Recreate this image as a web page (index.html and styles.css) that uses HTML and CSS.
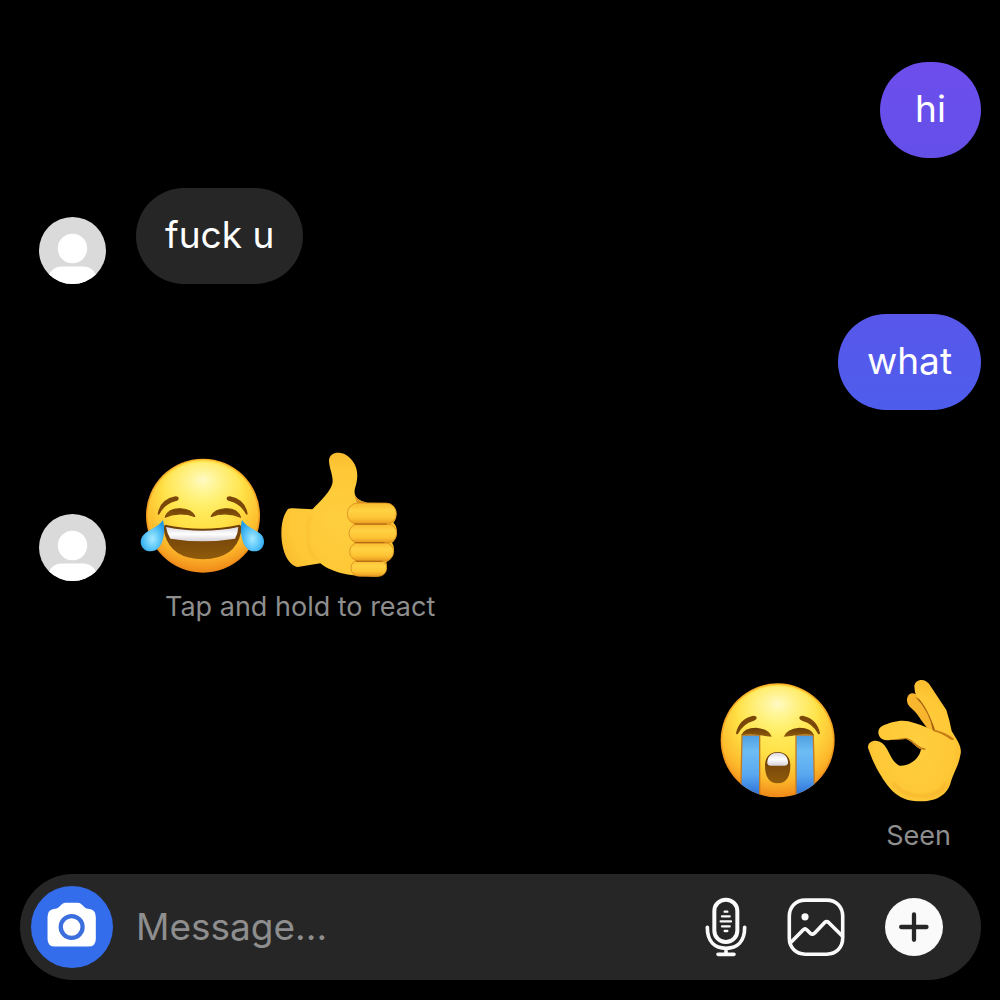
FILE: index.html
```
<!DOCTYPE html>
<html lang="en">
<head>
    <meta charset="UTF-8">
    <meta name="viewport" content="width=device-width, initial-scale=1.0">
    <title>Chat</title>
    <link rel="stylesheet" href="styles.css">
</head>
<body>
    <!-- shared gradients and the avatar -->
    <svg class="defs" width="0" height="0" aria-hidden="true">
        <defs>
            <radialGradient id="face" cx="50%" cy="28%" r="72%">
                <stop offset="0" stop-color="#fff36e"/>
                <stop offset="0.5" stop-color="#ffe045"/>
                <stop offset="0.8" stop-color="#fdb92b"/>
                <stop offset="1" stop-color="#f18d1b"/>
            </radialGradient>
            <radialGradient id="shine" cx="50%" cy="30%" r="60%">
                <stop offset="0" stop-color="#fffbd0" stop-opacity="0.9"/>
                <stop offset="1" stop-color="#fff36e" stop-opacity="0"/>
            </radialGradient>
            <linearGradient id="edge" x1="0" y1="0" x2="0" y2="1">
                <stop offset="0" stop-color="#fbb52c"/>
                <stop offset="1" stop-color="#ee8a19"/>
            </linearGradient>
            <linearGradient id="brown" x1="0" y1="0" x2="0" y2="1">
                <stop offset="0" stop-color="#6b3c07"/>
                <stop offset="1" stop-color="#8f5b0c"/>
            </linearGradient>
            <linearGradient id="teeth" x1="0" y1="0" x2="0" y2="1">
                <stop offset="0" stop-color="#d9d6dc"/>
                <stop offset="0.5" stop-color="#ffffff"/>
                <stop offset="1" stop-color="#d5d0d6"/>
            </linearGradient>
            <radialGradient id="drop" cx="50%" cy="60%" r="60%">
                <stop offset="0" stop-color="#a5e9ff"/>
                <stop offset="0.5" stop-color="#5fc8fa"/>
                <stop offset="1" stop-color="#209ce8"/>
            </radialGradient>
            <linearGradient id="stream" x1="0" y1="0" x2="0" y2="1">
                <stop offset="0" stop-color="#4d9fe0"/>
                <stop offset="0.25" stop-color="#6dbcf4"/>
                <stop offset="0.6" stop-color="#5aa9f0"/>
                <stop offset="1" stop-color="#2465d4"/>
            </linearGradient>
            <radialGradient id="hand" cx="50%" cy="55%" r="60%">
                <stop offset="0" stop-color="#ffcf3f"/>
                <stop offset="0.7" stop-color="#fec836"/>
                <stop offset="1" stop-color="#f8b82c"/>
            </radialGradient>
            <linearGradient id="finger" x1="0" y1="0" x2="0" y2="1">
                <stop offset="0" stop-color="#f9ba2e"/>
                <stop offset="0.35" stop-color="#ffd244"/>
                <stop offset="0.7" stop-color="#fec535"/>
                <stop offset="1" stop-color="#e89a20"/>
            </linearGradient>
            <clipPath id="cry-clip"><circle cx="218" cy="211" r="171"/></clipPath>
            <clipPath id="avatar-clip"><circle cx="100" cy="100" r="100"/></clipPath>
            <filter id="soft"><feGaussianBlur stdDeviation="4"/></filter>
            <symbol id="avatar" viewBox="0 0 200 200">
                <g clip-path="url(#avatar-clip)">
                    <rect width="200" height="200" fill="#dadada"/>
                    <circle cx="100" cy="94" r="44" fill="#fff"/>
                    <path d="M24 200 Q28 148 70 148 H130 Q172 148 176 200Z" fill="#fff"/>
                </g>
            </symbol>
        </defs>
    </svg>

    <main class="chat">
        <div class="message sent">
            <p class="bubble purple">hi</p>
        </div>

        <div class="message">
            <svg class="avatar" role="img" aria-label="Profile"><use href="#avatar"/></svg>
            <p class="bubble">fuck u</p>
        </div>

        <div class="message sent">
            <p class="bubble blue">what</p>
        </div>

        <div class="message">
            <svg class="avatar" role="img" aria-label="Profile"><use href="#avatar"/></svg>
            <div class="emojis">
                <svg class="emoji" viewBox="18 0 396 423" role="img" aria-label="Face with tears of joy">
                    <circle cx="219" cy="227" r="171" fill="url(#edge)"/>
                    <circle cx="219" cy="227" r="166" fill="url(#face)"/>
                    <ellipse cx="219" cy="155" rx="122" ry="88" fill="url(#shine)"/>
                    <g fill="#7b4708">
                        <path d="M83 222 Q90 178 136 169 Q147 169 146 177 Q145 182 136 184 Q104 192 88 223 Q84 226 83 222Z"/>
                        <path d="M353 222 Q346 178 300 169 Q289 169 290 177 Q291 182 300 184 Q332 192 348 223 Q352 226 353 222Z"/>
                    </g>
                    <path d="M105 232 Q112 206 150 206 Q188 208 195 230 Q171 220 149 222 Q124 223 105 232Z" fill="url(#brown)" stroke="#7b4708" stroke-width="3" stroke-linejoin="round"/>
                    <path d="M243 230 Q250 208 288 206 Q325 206 332 232 Q312 223 288 222 Q266 220 243 230Z" fill="url(#brown)" stroke="#7b4708" stroke-width="3" stroke-linejoin="round"/>
                    <path d="M104 254 Q218 278 329 254 Q337 258 333 277 Q316 357 219 358 Q124 357 104 283 Q100 263 104 254Z" fill="url(#brown)"/>
                    <path d="M108 261 Q218 284 325 261 Q324 281 315 296 Q218 312 121 296 Q111 280 108 261Z" fill="url(#teeth)"/>
                    <path d="M99 240 C108 273 101 334 62 334 C34 334 23 303 41 284 C55 269 84 262 99 240Z" fill="url(#drop)"/>
                    <path d="M336 240 C327 273 336 334 373 334 C400 334 411 303 394 284 C379 269 350 262 336 240Z" fill="url(#drop)"/>
                </svg>
                <svg class="emoji" viewBox="-6 0 396 423" role="img" aria-label="Thumbs up">
                    <path d="M188 122 C188 104 177 80 177 62 C178 31 222 31 242 56 C268 83 264 118 255 145 C249 169 263 181 291 188 L350 189 C378 189 388 230 370 248 C385 259 385 297 366 308 C378 326 372 356 349 366 C355 391 342 410 318 410 C262 411 187 402 151 370 L83 381 C31 371 19 249 54 207 Q60 204 68 205 L127 208 C149 184 188 151 188 122Z" fill="url(#hand)"/>
                    <path d="M122 225 Q109 250 114 310 Q122 348 145 360" fill="none" stroke="#f2a826" stroke-width="7" opacity="0.3" filter="url(#soft)"/>
                    <path d="M252 162 Q258 182 292 189 L262 192Z" fill="#dd9224"/>
                    <g fill="url(#finger)" stroke="#ce8119" stroke-width="2">
                        <rect x="243" y="360" width="107" height="49" rx="24"/>
                        <rect x="239" y="307" width="132" height="56" rx="28"/>
                        <rect x="237" y="251" width="143" height="58" rx="29"/>
                        <rect x="232" y="189" width="147" height="64" rx="31"/>
                    </g>
                    <path d="M254 252 H350 M254 308 H344 M258 364 H336" stroke="#aa6414" stroke-width="3" fill="none"/>
                </svg>
            </div>
        </div>
        <p class="caption">Tap and hold to react</p>

        <div class="message sent">
            <div class="emojis">
                <svg class="emoji" viewBox="36 -3 396 423" role="img" aria-label="Loudly crying face">
                    <circle cx="218" cy="211" r="171" fill="url(#edge)"/>
                    <circle cx="218" cy="211" r="166" fill="url(#face)"/>
                    <ellipse cx="218" cy="137" rx="122" ry="88" fill="url(#shine)"/>
                    <g fill="#7b4708">
                        <path d="M93 190 Q101 147 145 137 Q156 137 155 145 Q154 150 145 153 Q115 161 99 191 Q94 195 93 190Z"/>
                        <path d="M345 190 Q337 147 293 137 Q282 137 283 145 Q284 150 293 153 Q323 161 339 191 Q344 195 345 190Z"/>
                    </g>
                    <g clip-path="url(#cry-clip)">
                        <path d="M111 195 H164 V390 H107Z" fill="url(#stream)" stroke="#c17a22" stroke-width="4"/>
                        <path d="M273 195 H325 L329 390 H273Z" fill="url(#stream)" stroke="#c17a22" stroke-width="4"/>
                    </g>
                    <path d="M109 196 Q116 173 153 173 Q192 177 200 200 Q177 198 157 194 Q130 190 109 196Z" fill="url(#brown)"/>
                    <path d="M236 200 Q244 177 283 173 Q320 173 327 196 Q306 190 280 194 Q259 198 236 200Z" fill="url(#brown)"/>
                    <path d="M218 246 C244 246 256 264 256 287 C256 320 243 340 218 340 C193 340 180 320 180 287 C180 264 192 246 218 246Z" fill="url(#brown)"/>
                    <path d="M218 248 C240 248 250 264 249 280 Q247 287 240 287 H196 Q188 287 187 280 C186 264 196 248 218 248Z" fill="url(#teeth)"/>
                </svg>
                <svg class="emoji" viewBox="-3 -3 396 423" role="img" aria-label="OK hand">
                    <path d="M171 92 C170 68 194 63 204 80 L238 132 L251 185 L231 173 C211 150 204 130 180 111 Q171 103 171 92Z" fill="#f8b62e"/>
                    <path d="M196 81 Q238 122 250 186 L264 188 Q253 135 218 93Z" fill="#a8620f"/>
                    <path d="M193 49 C194 26 228 22 241 47 L289 120 Q299 150 305 183 C321 210 338 231 331 256 C326 287 311 306 301 341 C285 389 235 397 192 393 C133 387 105 339 79 293 C68 272 60 251 54 233 C53 210 82 206 97 220 C120 239 119 273 149 287 C179 288 207 269 213 238 C194 230 186 212 168 207 L110 211 C83 210 76 177 98 167 C119 158 150 148 175 154 Q217 164 257 185 C242 139 223 102 200 79 Q193 66 193 49Z" fill="url(#hand)"/>
                    <path d="M110 211 L168 207 C187 212 195 231 213 238 C231 243 233 235 217 233 C199 226 190 209 169 203Z" fill="#c57a15"/>
                    <path d="M249 182 Q280 191 300 208 Q311 213 312 206 Q285 187 258 180Z" fill="#c77c16"/>
                    <path d="M288 338 Q276 366 238 376 Q168 388 128 338" fill="none" stroke="#ed9a22" stroke-width="8" opacity="0.4" filter="url(#soft)"/>
                </svg>
            </div>
        </div>
        <p class="caption caption-sent">Seen</p>
    </main>

    <form class="composer">
        <button class="icon-btn" type="button" aria-label="Camera">
            <svg width="82" height="82" viewBox="65 63 248 248">
                <circle cx="189" cy="187" r="124" fill="#346dec"/>
                <path d="M138 132 C153 132 154 114 170 114 H206 C222 114 223 132 238 132 Q261 134 261 156 V223 Q261 246 238 246 H138 Q115 246 115 223 V156 Q115 134 138 132Z" fill="#fff"/>
                <circle cx="188" cy="187" r="33" fill="none" stroke="#3b6fdd" stroke-width="13"/>
            </svg>
        </button>
        <input class="message-input" type="text" placeholder="Message..." aria-label="Message">
        <div class="actions">
            <button class="icon-btn" type="button" aria-label="Voice message">
                <svg width="42" height="60" viewBox="43 96 126 180" fill="none" stroke="#fafafa" stroke-linecap="round">
                    <rect x="71" y="104" width="69" height="127" rx="34" stroke-width="12"/>
                    <path d="M50 187 C50 231 73 250 106 250 C139 250 162 231 162 187 M106 250 V268 M82 268 H130" stroke-width="11"/>
                    <path d="M102 140 H110 M94 154 H117 M90 169 H121 M94 184 H117 M102 198 H110" stroke-width="7"/>
                </svg>
            </button>
            <button class="icon-btn" type="button" aria-label="Photo gallery">
                <svg width="58" height="60" viewBox="293 96 177 180" fill="none" stroke="#fafafa" stroke-width="11" stroke-linecap="round" stroke-linejoin="round">
                    <path d="M349 104 H414 C444 104 463 125 463 154 V219 C463 248 444 269 414 269 H349 C319 269 300 248 300 219 V154 C300 125 319 104 349 104Z"/>
                    <path d="M303 235 L342 195 Q348 189 354 195 L364 205 Q370 211 377 205 L408 172 Q414 167 420 172 L461 213"/>
                    <circle cx="348" cy="155" r="11" fill="#fafafa" stroke="none"/>
                </svg>
            </button>
            <button class="icon-btn" type="button" aria-label="More">
                <svg width="58" height="60" viewBox="584 97 176 180">
                    <circle cx="672" cy="187" r="88" fill="#fafafa"/>
                    <path d="M672 149 V226 M633 187 H710" stroke="#262626" stroke-width="13" stroke-linecap="round"/>
                </svg>
            </button>
        </div>
    </form>
</body>
</html>
```
FILE: styles.css
```
* {
    box-sizing: border-box;
}

body {
    font-family: Inter, 'Liberation Sans', sans-serif;
    display: flex;
    flex-direction: column;
    min-height: 100vh;
    margin: 0;
    background-color: #000;
    color: #fff;
}

.defs {
    position: absolute;
}

.chat {
    display: flex;
    flex-direction: column;
    padding: 62px 19px 0 39px;
}

.message {
    display: flex;
    align-items: flex-end;
    gap: 30px;
    margin-bottom: 30px;
}

.message:has(+ .caption) {
    margin-bottom: 0;
}

.sent {
    justify-content: flex-end;
}

.avatar {
    width: 67px;
    height: 67px;
    flex-shrink: 0;
}

.bubble {
    min-width: 101px;
    margin: 0;
    padding: 23px 29px 25px;
    border-radius: 48px;
    background-color: #262626;
    font-size: 37px;
    line-height: 48px;
    text-align: center;
}

.purple {
    background: linear-gradient(#6d4eec, #644fe9);
}

.blue {
    background: linear-gradient(#5857ea, #4e5ded);
}

.emojis {
    display: flex;
}

.emoji {
    display: block;
    width: 132px;
    height: 141px;
}

.caption {
    margin: 10px 30px 46px 126px;
    color: #8e8e8e;
    font-size: 27px;
    line-height: 32px;
}

.caption-sent {
    margin-bottom: 16px;
    text-align: right;
}

.composer {
    display: flex;
    align-items: center;
    gap: 23px;
    margin: auto 19px 20px 20px;
    padding: 12px 38px 12px 11px;
    border-radius: 53px;
    background-color: #262626;
}

.icon-btn {
    padding: 0;
    border: none;
    background: none;
    cursor: pointer;
}

.icon-btn svg {
    display: block;
}

.message-input {
    flex: 1;
    min-width: 0;
    padding: 0;
    border: none;
    outline: none;
    background: none;
    color: #fff;
    font-family: inherit;
    font-size: 37px;
    line-height: 48px;
}

.message-input::placeholder {
    color: #8e8e8e;
    opacity: 1;
}

.actions {
    display: flex;
    align-items: center;
    gap: 40px;
}
```
